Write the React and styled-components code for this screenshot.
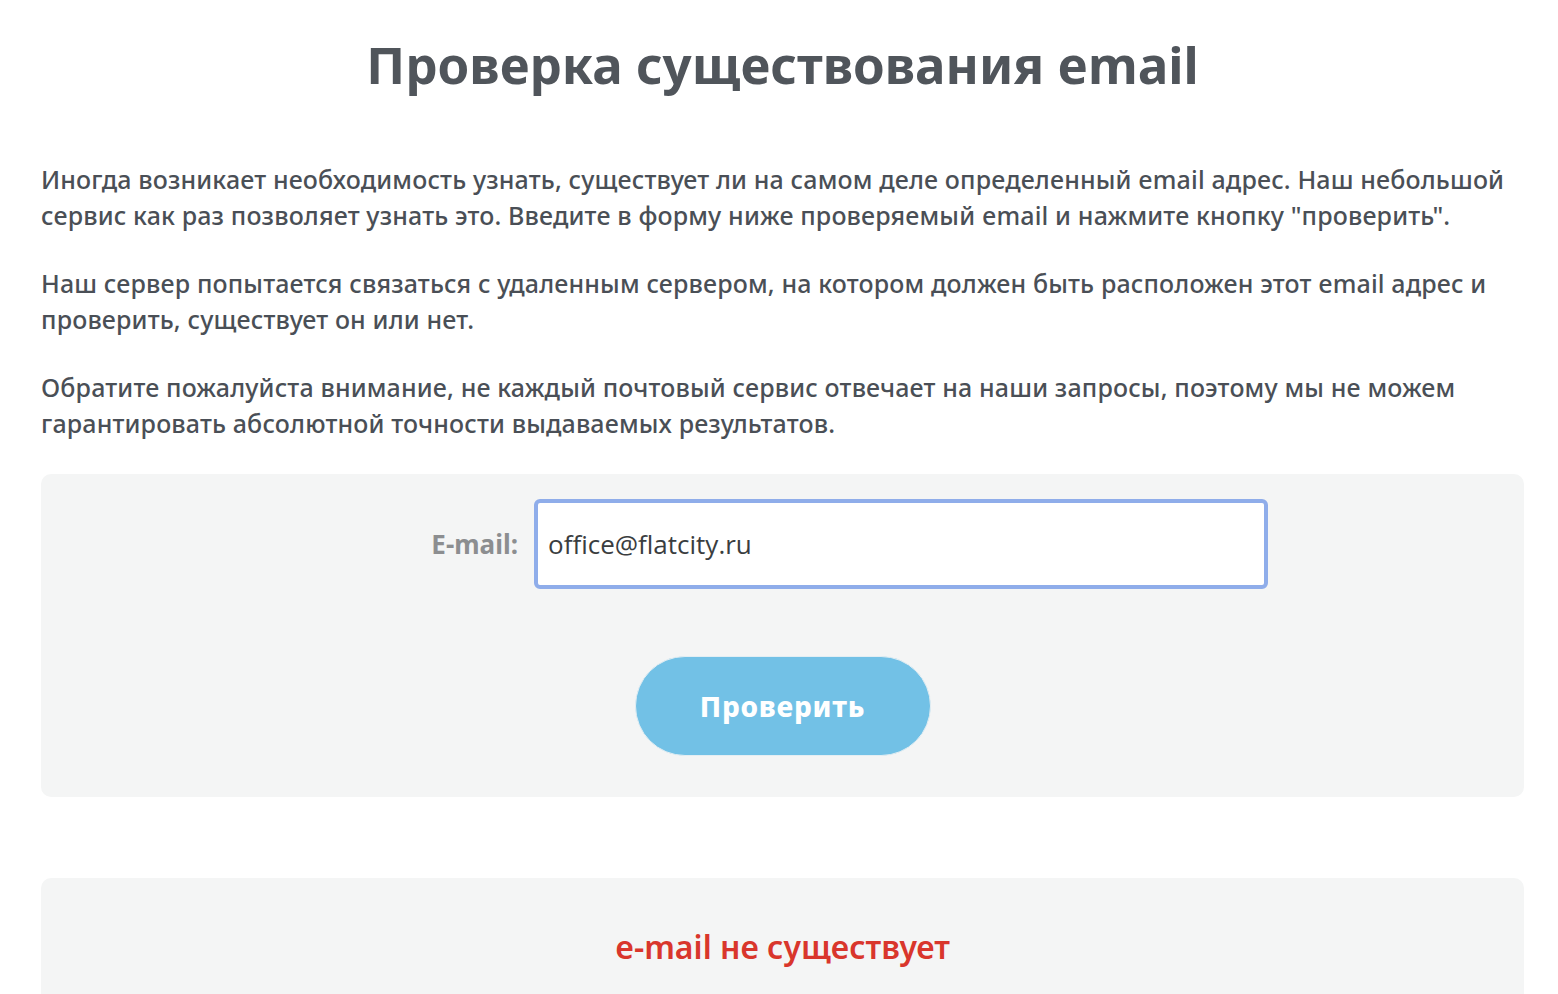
import React from "react"
import styled, { createGlobalStyle } from "styled-components"

const GlobalStyle = createGlobalStyle`
  html, body {
    margin: 0;
    padding: 0;
    background: #fff;
  }
  body {
    font-family: "Noto Sans", "Open Sans", sans-serif;
    color: #4a4f56;
  }
  * {
    box-sizing: border-box;
  }
`

export default function App() {
  return (
    <>
      <GlobalStyle />
      <Page>
        <Title>Проверка существования email</Title>
        <Text>
          Иногда возникает необходимость узнать, существует ли на самом деле определенный email адрес. Наш небольшой
          <br />
          сервис как раз позволяет узнать это. Введите в форму ниже проверяемый email и нажмите кнопку "проверить".
        </Text>
        <Text>
          Наш сервер попытается связаться с удаленным сервером, на котором должен быть расположен этот email адрес и
          <br />
          проверить, существует он или нет.
        </Text>
        <Text>
          Обратите пожалуйста внимание, не каждый почтовый сервис отвечает на наши запросы, поэтому мы не можем
          <br />
          гарантировать абсолютной точности выдаваемых результатов.
        </Text>
        <FormBox>
          <FieldRow>
            <Label htmlFor="email">E-mail:</Label>
            <Input id="email" type="text" defaultValue="office@flatcity.ru" />
          </FieldRow>
          <CheckButton type="button">Проверить</CheckButton>
        </FormBox>
        <ResultBox>
          <Result>e-mail не существует</Result>
        </ResultBox>
      </Page>
    </>
  )
}

/* - - - Layout - - - */

const Page = styled.div`
  width: 1483px;
  margin-left: 41px;
  padding-top: 34px;
  height: 994px;
  overflow: hidden;
`

const Title = styled.h1`
  margin: 0 0 67px;
  text-align: center;
  font-size: 51px;
  line-height: 60px;
  font-weight: 700;
  color: #50555b;
`

const Text = styled.p`
  margin: 0 0 32px;
  font-size: 25px;
  line-height: 36px;
  font-weight: 500;
  letter-spacing: 0.15px;
  white-space: nowrap;
`

/* - - - Form - - - */

const FormBox = styled.div`
  margin-top: 33px;
  background: #f4f5f5;
  border-radius: 10px;
  padding: 25px 0 41px;
  display: flex;
  flex-direction: column;
  align-items: center;
`

const FieldRow = styled.div`
  align-self: stretch;
  display: flex;
  align-items: center;
  gap: 16px;
`

const Label = styled.label`
  width: 477px;
  text-align: right;
  font-size: 26px;
  font-weight: 700;
  color: #8c8e90;
`

const Input = styled.input`
  width: 734px;
  height: 90px;
  border: 4px solid #8fadea;
  border-radius: 6px;
  padding: 0 10px;
  font-family: "Open Sans", sans-serif;
  font-size: 26px;
  color: #3a3d40;
  background: #fff;
  outline: none;
`

const CheckButton = styled.button`
  margin-top: 67px;
  width: 296px;
  height: 100px;
  border: 1px solid #e3eef3;
  border-radius: 50px;
  background: #72c1e6;
  color: #fff;
  font-family: "Noto Sans", sans-serif;
  font-size: 28px;
  font-weight: 800;
  letter-spacing: 0.8px;
`

/* - - - Result - - - */

const ResultBox = styled.div`
  margin-top: 81px;
  background: #f4f5f5;
  border-radius: 10px;
  padding: 47px 0 60px;
  text-align: center;
`

const Result = styled.div`
  font-size: 32px;
  font-weight: 600;
  color: #d9362c;
`
